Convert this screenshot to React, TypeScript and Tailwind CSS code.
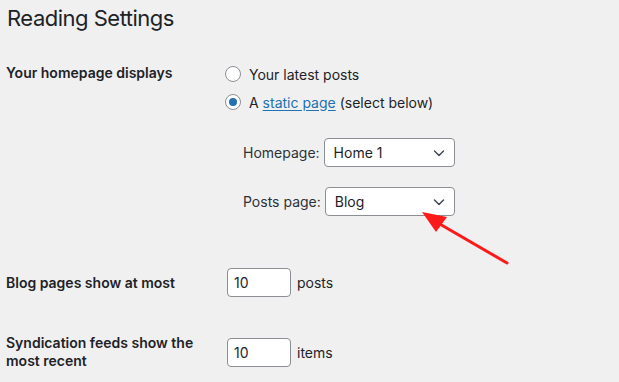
import React from "react";

const Chevron = () => (
  <svg width="14" height="14" viewBox="0 0 14 14" className="absolute right-[8px] top-1/2 -translate-y-1/2">
    <path d="M2.5 5 L7 9.5 L11.5 5" fill="none" stroke="#3c434a" strokeWidth="1.4" strokeLinecap="round" strokeLinejoin="round" />
  </svg>
);

const Select = ({ value, width }: { value: string; width: string }) => (
  <div className={`relative ${width} h-[29px] bg-white border border-[#8c8f94] rounded-[4px] flex items-center pl-[9px] text-[14px] text-[#1d2327]`}>
    {value}
    <Chevron />
  </div>
);

const Radio = ({ checked }: { checked?: boolean }) => (
  <div className="w-[16px] h-[16px] rounded-full border border-[#8c8f94] bg-white flex items-center justify-center shrink-0">
    {checked && <div className="w-[8px] h-[8px] rounded-full bg-[#2271b1]" />}
  </div>
);

const NumInput = ({ value }: { value: string }) => (
  <div className="ml-[2px] w-[64px] h-[29px] bg-white border border-[#8c8f94] rounded-[4px] flex items-center pl-[6px] text-[14px] text-[#1d2327]">
    {value}
  </div>
);

export default function App() {
  return (
    <div
      className="relative w-[619px] h-[382px] overflow-hidden bg-[#f0f0f1] text-[#1d2327] pl-[6px]"
      style={{ fontFamily: "Inter, 'Liberation Sans', sans-serif" }}
    >
      <h1 className="text-[22px] leading-[30px] font-normal tracking-[-0.5px] pt-[3px] h-[33px] pl-[1px]">Reading Settings</h1>

      {/* Row 1 */}
      <div className="flex mt-[27px]">
        <div className="w-[219px] shrink-0 pt-[3px] text-[14px] leading-[20px] font-semibold">Your homepage displays</div>
        <div className="flex flex-col text-[14px]">
          <div className="h-[28px] flex items-center gap-[8px]">
            <Radio />
            <span>Your latest posts</span>
          </div>
          <div className="h-[28px] flex items-center gap-[8px]">
            <Radio checked />
            <span>
              A <span className="text-[#2271b1] underline underline-offset-2">static page</span> (select below)
            </span>
          </div>
          <div className="mt-[22px] ml-[18px] flex items-center gap-[4px] h-[29px]">
            <span className="text-[#2c3338]">Homepage:</span>
            <Select value="Home 1" width="w-[131px]" />
          </div>
          <div className="mt-[20px] ml-[18px] flex items-center gap-[4px] h-[29px]">
            <span className="text-[#2c3338]">Posts page:</span>
            <Select value="Blog" width="w-[130px]" />
          </div>
        </div>
      </div>

      {/* Blog pages */}
      <div className="flex mt-[52px] items-center h-[29px]">
        <div className="w-[219px] shrink-0 text-[14px] leading-[20px] font-semibold">Blog pages show at most</div>
        <NumInput value="10" />
        <span className="ml-[6px] text-[14px]">posts</span>
      </div>

      {/* Syndication */}
      <div className="flex mt-[41px]">
        <div className="w-[219px] shrink-0 -mt-[4px]">
          <div className="w-[200px] text-[14px] leading-[18px] font-semibold">Syndication feeds show the most recent</div>
        </div>
        <div className="flex items-center h-[29px]">
          <NumInput value="10" />
          <span className="ml-[6px] text-[14px]">items</span>
        </div>
      </div>

      {/* Red annotation arrow */}
      <svg className="absolute left-0 top-0 pointer-events-none" width="619" height="382">
        <line x1="507" y1="263" x2="438" y2="223" stroke="#ff1a1a" strokeWidth="3" strokeLinecap="round" />
        <polygon points="422,212 447,217 436,232" fill="#ff1a1a" />
      </svg>
    </div>
  );
}
